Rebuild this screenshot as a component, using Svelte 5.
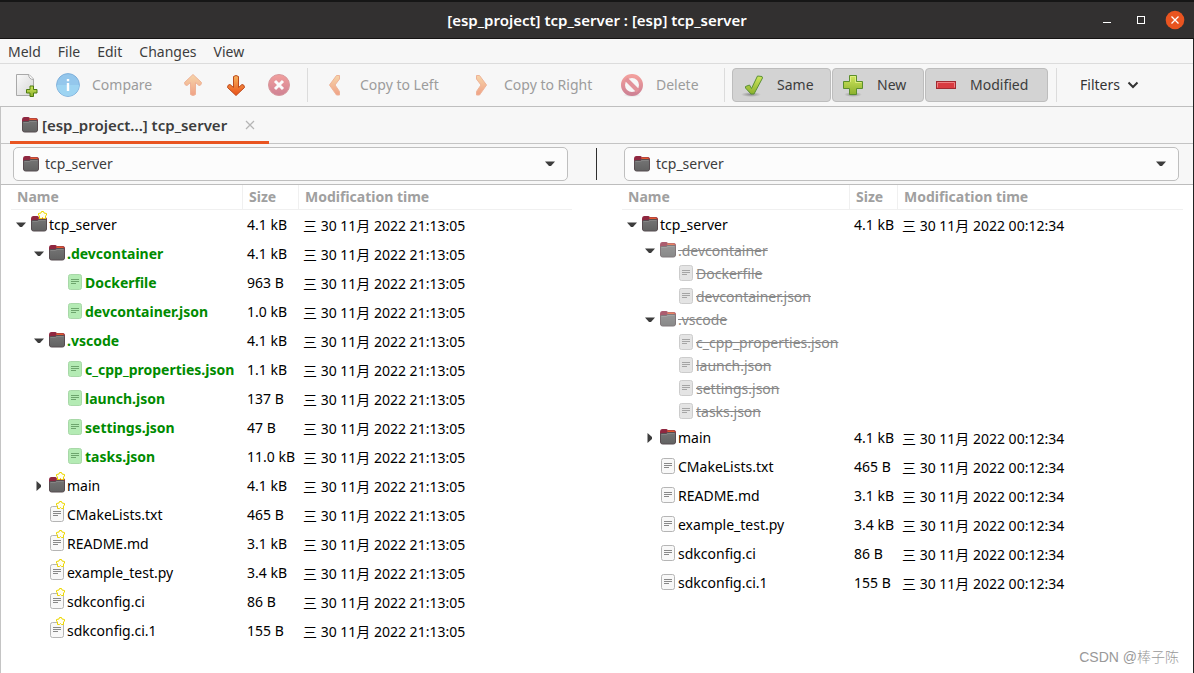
<script>
  const leftTime = '三 30 11月 2022 21:13:05';
  const rightTime = '三 30 11月 2022 00:12:34';

  const entries = [
    { name: 'tcp_server', level: 0, kind: 'folder', open: true, size: '4.1 kB' },
    { name: '.devcontainer', level: 1, kind: 'folder', open: true, size: '4.1 kB', added: true },
    { name: 'Dockerfile', level: 2, kind: 'file', size: '963 B', added: true },
    { name: 'devcontainer.json', level: 2, kind: 'file', size: '1.0 kB', added: true },
    { name: '.vscode', level: 1, kind: 'folder', open: true, size: '4.1 kB', added: true },
    { name: 'c_cpp_properties.json', level: 2, kind: 'file', size: '1.1 kB', added: true },
    { name: 'launch.json', level: 2, kind: 'file', size: '137 B', added: true },
    { name: 'settings.json', level: 2, kind: 'file', size: '47 B', added: true },
    { name: 'tasks.json', level: 2, kind: 'file', size: '11.0 kB', added: true },
    { name: 'main', level: 1, kind: 'folder', open: false, size: '4.1 kB' },
    { name: 'CMakeLists.txt', level: 1, kind: 'file', size: '465 B' },
    { name: 'README.md', level: 1, kind: 'file', size: '3.1 kB' },
    { name: 'example_test.py', level: 1, kind: 'file', size: '3.4 kB' },
    { name: 'sdkconfig.ci', level: 1, kind: 'file', size: '86 B' },
    { name: 'sdkconfig.ci.1', level: 1, kind: 'file', size: '155 B' }
  ];

  const panes = [
    {
      side: 'left',
      rows: entries.map((e) => ({ ...e, state: e.added ? 'new' : 'same', star: !e.added, time: leftTime }))
    },
    {
      side: 'right',
      rows: entries.map((e) =>
        e.added
          ? { ...e, state: 'missing', size: '', time: '' }
          : { ...e, state: 'same', time: rightTime }
      )
    }
  ];

  const menus = ['Meld', 'File', 'Edit', 'Changes', 'View'];
</script>

{#snippet folder()}
  <svg class="icon" width="16" height="16" viewBox="0 0 16 16" aria-hidden="true">
    <path d="M0 3Q0 0 2.5 0H6.5L8 1H13.5Q16 1 16 3.5V8H0Z" fill="#8f2740" />
    <path d="M7 1H13.5Q15.5 1 15.7 3.5H7Z" fill="#b8473c" />
    <path d="M8 2.5H14" stroke="#e4572e" />
    <path d="M0.5 5Q0.5 4.5 1.5 4.5H6L7.5 3.5H14.5Q15.5 3.5 15.5 4.5V13Q15.5 15 13.5 15H2.5Q0.5 15 0.5 13Z" fill="url(#folderBody)" stroke="#574c50" />
    <path d="M1.5 5.5H6.5L8 4.5H14.5" stroke="#858585" fill="none" />
  </svg>
{/snippet}

{#snippet sheet()}
  <svg class="icon" width="16" height="16" viewBox="0 0 16 16" aria-hidden="true">
    <rect class="paper" x="1.5" y="0.5" width="13" height="15" rx="2" />
    <path class="ink" d="M4 5.5H12M4 7.5H12M4 9.5H9" />
  </svg>
{/snippet}

{#snippet down()}
  <svg class="arrow" width="10" height="6" viewBox="0 0 10 6" aria-hidden="true"><path d="M0 0.5H10L6 5H4Z" fill="#3d3d3d" /></svg>
{/snippet}

<svg class="defs" width="0" height="0" aria-hidden="true">
  <defs>
    <linearGradient id="folderBody" x2="0" y2="1"><stop stop-color="#747474" /><stop offset="1" stop-color="#626262" /></linearGradient>
    <linearGradient id="orange" x2="0" y2="1"><stop stop-color="#f7b45f" /><stop offset="1" stop-color="#ea4f16" /></linearGradient>
    <linearGradient id="red" x2="0" y2="1"><stop stop-color="#ef4a45" /><stop offset="1" stop-color="#a80f33" /></linearGradient>
    <linearGradient id="green" x2="0" y2="1"><stop stop-color="#cfe75e" /><stop offset="1" stop-color="#8cb02c" /></linearGradient>
    <linearGradient id="paperFill" x2="1" y2="1"><stop stop-color="#fafafa" /><stop offset="1" stop-color="#d6d6d6" /></linearGradient>
    <radialGradient id="shade"><stop stop-color="#000" stop-opacity=".35" /><stop offset="1" stop-color="#000" stop-opacity="0" /></radialGradient>
  </defs>
</svg>

<div class="window">
  <header class="titlebar">
    <h1>[esp_project] tcp_server : [esp] tcp_server</h1>
    <div class="controls">
      <button aria-label="Minimize"><svg width="20" height="20" viewBox="0 0 20 20"><path d="M6 12.5H14" stroke="#fff" /></svg></button>
      <button aria-label="Maximize"><svg width="20" height="20" viewBox="0 0 20 20"><rect x="6.5" y="6.5" width="7" height="7" fill="none" stroke="#fff" /></svg></button>
      <button aria-label="Close window"><svg width="20" height="20" viewBox="0 0 20 20"><circle cx="10" cy="10" r="9.3" fill="#e95420" /><path d="M6.5 6.5L13.5 13.5M13.5 6.5L6.5 13.5" stroke="#fff" stroke-width="1.3" /></svg></button>
    </div>
  </header>

  <nav class="menubar">
    {#each menus as m}<button>{m}</button>{/each}
  </nav>

  <div class="toolbar">
    <button class="square" aria-label="New comparison">
      <svg width="24" height="24" viewBox="0 0 24 24">
        <path d="M1.5 1.5H14L18.5 6V22.5H1.5Z" fill="url(#paperFill)" stroke="#a9a9a9" />
        <path d="M13.5 1.5Q14 6.5 18.5 6.5" fill="#fff" stroke="#a9a9a9" />
        <path d="M15 14H18.5V17.5H22V21H18.5V24.5H15V21H11.5V17.5H15Z" transform="translate(0 -1)" fill="url(#green)" stroke="#4e7d12" />
      </svg>
    </button>
    <button class="compare" disabled>
      <svg width="24" height="24" viewBox="0 0 24 24">
        <circle cx="12" cy="12" r="11.4" fill="#94c7ec" stroke="#7fb0db" /><path d="M1 12A11 11 0 0 0 23 12Z" fill="#9dd4f2" />
        <path d="M12 6V8.2M12 10V18" stroke="#fff" stroke-width="2.4" />
      </svg>
      Compare
    </button>
    <button class="square" disabled aria-label="Previous change">
      <svg class="dim" width="24" height="24" viewBox="0 0 24 24"><path d="M12 1.5L20.5 9.5Q20.5 12.5 18 12.5L14.5 9.5V21.5Q12 23.5 9.5 21.5V9.5L6 12.5Q3.5 12.5 3.5 9.5Z" fill="url(#orange)" stroke="#e6703a" stroke-linejoin="round" /></svg>
    </button>
    <button class="square" aria-label="Next change">
      <svg width="24" height="24" viewBox="0 0 24 24"><path d="M12 22.5L20.5 14.5Q20.5 11.5 18 11.5L14.5 14.5V3.5Q12 1.5 9.5 3.5V14.5L6 11.5Q3.5 11.5 3.5 14.5Z" fill="url(#orange)" stroke="#bd4a1d" stroke-linejoin="round" /></svg>
    </button>
    <button class="square" disabled aria-label="Stop">
      <svg class="dim" width="24" height="24" viewBox="0 0 24 24"><circle cx="12" cy="12" r="10.5" fill="url(#red)" stroke="#b93b45" /><path d="M8 8L16 16M16 8L8 16" stroke="#fff" stroke-width="3" /></svg>
    </button>
    <span class="sep"></span>
    <button class="copy-left" disabled>
      <svg class="dim" width="24" height="24" viewBox="0 0 24 24"><path d="M12.5 2.5H15.5V6L11 12L15.5 18.5V22H12.5L5.5 12Z" fill="url(#orange)" stroke="#e6703a" stroke-linejoin="round" /></svg>
      Copy to Left
    </button>
    <button class="copy-right" disabled>
      <svg class="dim" width="24" height="24" viewBox="0 0 24 24"><path d="M11.5 2.5H8.5V6L13 12L8.5 18.5V22H11.5L18.5 12Z" fill="url(#orange)" stroke="#e6703a" stroke-linejoin="round" /></svg>
      Copy to Right
    </button>
    <button class="delete" disabled>
      <svg class="dim" width="24" height="24" viewBox="0 0 24 24"><ellipse cx="12" cy="22" rx="9" ry="2" fill="url(#shade)" /><circle cx="12" cy="12" r="9" fill="none" stroke="url(#red)" stroke-width="4" /><path d="M6 6L18 18" stroke="#cf3040" stroke-width="4" /></svg>
      Delete
    </button>
    <span class="sep"></span>
    <button class="toggle same" aria-pressed="true">
      <svg width="24" height="24" viewBox="0 0 24 24"><ellipse cx="10" cy="21.5" rx="10" ry="2.5" fill="url(#shade)" /><path d="M4.5 13.5L8.5 12L10.5 15.5L16.5 3L21 3.5L21.5 5L13 21H10L4.5 15Z" fill="url(#green)" stroke="#5b9136" stroke-linejoin="round" /></svg>
      Same
    </button>
    <button class="toggle new" aria-pressed="true">
      <svg width="24" height="24" viewBox="0 0 24 24"><ellipse cx="12" cy="21.5" rx="9" ry="2.5" fill="url(#shade)" /><path d="M8.5 2.5H15.5V8.5H21.5V15.5H15.5V21.5H8.5V15.5H2.5V8.5H8.5Z" fill="url(#green)" stroke="#5b8f2c" /><path d="M9.5 9V3.5H14.5V9.5H20.5" fill="none" stroke="#e3f089" opacity=".8" /></svg>
      New
    </button>
    <button class="toggle modified" aria-pressed="true">
      <svg width="24" height="24" viewBox="0 0 24 24"><rect x="2.5" y="8.5" width="19" height="7" fill="#d93b40" stroke="#a02a30" /><path d="M3.5 14.5V9.5H20.5V14.5" fill="none" stroke="#ee8184" /></svg>
      Modified
    </button>
    <span class="sep"></span>
    <button class="filters">
      Filters
      <svg width="12" height="8" viewBox="0 0 12 8"><path d="M1.5 1.5L6 6L10.5 1.5" fill="none" stroke="#333" stroke-width="2" /></svg>
    </button>
  </div>

  <div class="tabs">
    <div class="tab">
      {@render folder()}
      <span>[esp_project...] tcp_server</span>
      <button aria-label="Close tab"><svg width="10" height="10" viewBox="0 0 10 10"><path d="M1 1L9 9M9 1L1 9" stroke="#b5b5b5" stroke-width="1.2" /></svg></button>
    </div>
  </div>

  <div class="choosers">
    <div class="chooser">
      {@render folder()}
      <select aria-label="Left folder"><option>tcp_server</option></select>
      {@render down()}
    </div>
    <div class="divider"><span></span></div>
    <div class="chooser">
      {@render folder()}
      <select aria-label="Right folder"><option>tcp_server</option></select>
      {@render down()}
    </div>
  </div>

  <main class="panes">
    {#each panes as pane}
      <table class={pane.side}>
        <thead>
          <tr><th class="name">Name</th><th class="size">Size</th><th>Modification time</th></tr>
        </thead>
        <tbody>
          {#each pane.rows as row}
            <tr class={row.state}>
              <td>
                <div class="entry level{row.level}">
                  <span class="expander">
                    {#if row.kind === 'folder'}
                      {#if row.open}
                        {@render down()}
                      {:else}
                        <svg width="6" height="10" viewBox="0 0 6 10"><path d="M0.5 0V10L5 6V4Z" fill="#3d3d3d" /></svg>
                      {/if}
                    {/if}
                  </span>
                  <span class="glyph">
                    {#if row.kind === 'folder'}{@render folder()}{:else}{@render sheet()}{/if}
                    {#if row.star}
                      <svg class="star" width="9" height="8" viewBox="0 0 9 8"><path d="M3 2L3.5 0.5H5.5L6 2L8.5 2.5V4L7.5 5V7.5H5.5L4.5 6.5L3.5 7.5H1.5V5L0.5 4V2.5Z" fill="#fffef0" stroke="#ecd600" /></svg>
                    {/if}
                  </span>
                  <span class="label">{row.name}</span>
                </div>
              </td>
              <td>{row.size}</td>
              <td class="time">{row.time}</td>
            </tr>
          {/each}
        </tbody>
      </table>
    {/each}
  </main>
  <div class="watermark">CSDN @棒子陈</div>
</div>

<style>
  :global(body) { margin: 0; background: #fff; }
  .defs { position: absolute; }
  .window {
    position: relative;
    display: flex;
    flex-direction: column;
    box-sizing: border-box;
    min-height: 100vh;
    border-right: 1px solid #222;
    background: #fff;
    color: #3d3d3d;
    font: 14px/20px "Noto Sans", "Noto Sans CJK SC", sans-serif;
  }
  button { font: inherit; color: inherit; background: none; border: 0; padding: 0; margin: 0; }
  svg { display: block; flex: none; }

  .titlebar {
    display: grid;
    grid-template-columns: 1fr auto 1fr;
    align-items: center;
    box-sizing: border-box;
    height: 39px;
    padding: 0 9px;
    margin-right: -1px;
    background: #323030;
    border-top: 2px solid #161616;
    border-bottom: 1px solid #151313;
    color: #fff;
  }
  h1 { grid-column: 2; margin: 0; font-size: 15px; line-height: 20px; font-weight: 600; }
  .controls { display: flex; justify-content: flex-end; gap: 14px; }

  .menubar {
    display: flex;
    gap: 17px;
    height: 24px;
    padding: 0 8px;
    background: #f7f7f7;
    border-bottom: 1px solid #dcdcdc;
  }
  .menubar button { padding-top: 2px; }

  .toolbar {
    display: flex;
    align-items: center;
    height: 42px;
    padding-left: 5px;
    background: #f7f7f7;
    border-bottom: 1px solid #bfbfbf;
  }
  .toolbar button {
    display: flex;
    align-items: center;
    gap: 12px;
    box-sizing: border-box;
    height: 34px;
    padding: 0 8px;
    white-space: nowrap;
    flex: none;
  }
  .toolbar .square { width: 43px; padding: 0 10px; }
  .toolbar button:disabled { color: #9c9c9c; }
  .dim { opacity: .5; }
  .toolbar .compare { width: 123px; }
  .toolbar .copy-left { width: 145px; padding-left: 9px; }
  .toolbar .copy-right { width: 152px; }
  .toolbar .delete { width: 105px; }
  .sep { flex: none; width: 1px; height: 34px; margin: 0 7px; background: #dcdcdc; }
  .toolbar .toggle { background: #d3d3d3; border: 1px solid #bdbdbd; border-radius: 4px; margin-right: 1px; }
  .toolbar .same { width: 99px; }
  .toolbar .new { width: 92px; }
  .toolbar .modified { width: 123px; }
  .toolbar .filters { padding: 0 16px; gap: 7px; color: #333; }

  .tabs {
    display: flex;
    height: 36px;
    padding-left: 9px;
    background: #f7f7f7;
    border-left: 1px solid #c4c4c4;
    border-bottom: 1px solid #c4c4c4;
  }
  .tab {
    display: flex;
    align-items: center;
    box-sizing: border-box;
    height: 37px;
    width: 259px;
    padding: 2px 14px 0 12px;
    border-bottom: 3px solid #e95420;
    font-size: 15px;
    font-weight: 600;
  }
  .tab span { flex: 1; margin-left: 4px; white-space: nowrap; }

  .choosers {
    display: grid;
    grid-template-columns: 1fr 56px 1fr;
    padding: 3px 14px 3px 12px;
    background: #f7f7f7;
    border-left: 1px solid #c4c4c4;
    border-bottom: 1px solid #bdbdbd;
  }
  .chooser {
    display: grid;
    grid-template-columns: 9px 16px 1fr 10px 12px;
    align-items: center;
    box-sizing: border-box;
    height: 34px;
    border: 1px solid #bfbfbf;
    border-radius: 5px;
    background: #fcfcfc;
  }
  .chooser .icon { grid-area: 1 / 2; }
  .chooser .arrow { grid-area: 1 / 4; }
  .chooser select {
    grid-area: 1 / 1 / 2 / 6;
    appearance: none;
    height: 32px;
    padding: 0 30px 0 31px;
    border: 0;
    background: none;
    font: inherit;
    color: inherit;
  }
  .divider { display: flex; justify-content: center; align-items: center; }
  .divider span { width: 1px; height: 32px; background: #2e2e2e; }

  .panes {
    flex: 1;
    display: grid;
    grid-template-columns: 1fr 1fr;
    gap: 50px;
    align-items: start;
    padding: 0 10px 17px 10px;
    border-left: 1px solid #c4c4c4;
  }
  table { width: 100%; table-layout: fixed; border-collapse: separate; border-spacing: 0; color: #000; }
  th {
    box-sizing: border-box;
    height: 25px;
    padding: 0 6px;
    border-bottom: 1px solid #f0f0f0;
    border-right: 1px solid #f0f0f0;
    text-align: left;
    font-weight: 700;
    color: #a0a0a0;
    white-space: nowrap;
  }
  th:last-child { border-right: 0; }
  .left .name { width: 232px; }
  .left .size { width: 56px; }
  .right .name { width: 228px; }
  .right .size { width: 48px; }
  td { box-sizing: border-box; height: 29px; padding: 0 0 0 4px; white-space: nowrap; }
  .missing td { height: 23px; }
  .time { padding: 2px 0 0 4px; }
  .missing .time { padding: 0; }
  .entry { display: flex; align-items: center; }
  .level1 { padding-left: 18px; }
  .level2 { padding-left: 36px; }
  .expander { display: flex; justify-content: center; width: 12px; margin-right: 4px; }
  .glyph { position: relative; margin: 0 2px 2px 0; }
  .star { position: absolute; right: 0; top: -5px; }
  .paper { fill: #f8f8f8; stroke: #b5b5b5; }
  .ink { fill: none; stroke: #888; }
  .new .label { color: #008b00; font-weight: 700; }
  .new .paper { fill: #b4ebb4; stroke: #a8d8a8; }
  .new .ink { stroke: #6da56d; }
  .missing .label { color: #888; text-decoration: line-through; }
  .missing .glyph .icon { opacity: .75; }
  .missing .paper { fill: #dcdcdc; stroke: #bcbcbc; }

  .watermark {
    position: absolute;
    right: 14px;
    bottom: 6px;
    font: 300 14px/20px "Liberation Sans", "Noto Sans CJK SC", sans-serif;
    color: #999;
  }
</style>
